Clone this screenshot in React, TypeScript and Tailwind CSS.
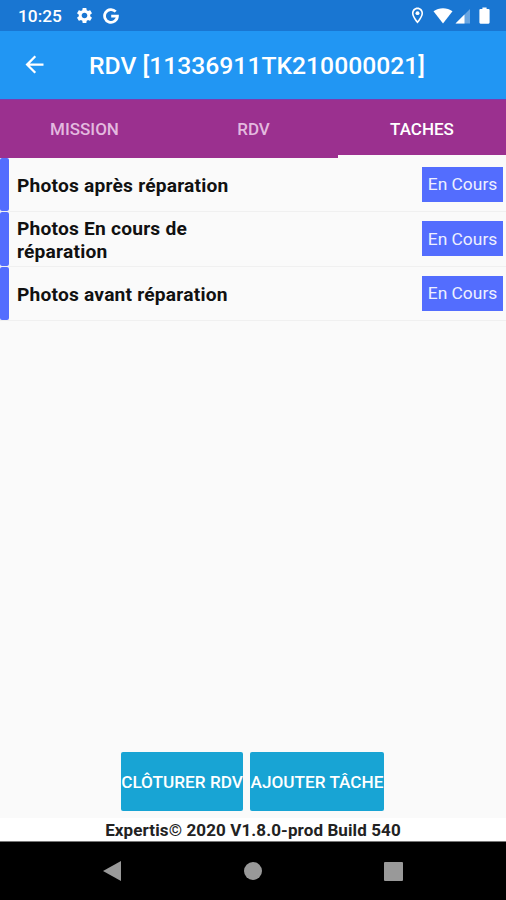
import { useState } from "react";
import { MdArrowBack, MdOutlineLocationOn, MdSettings } from "react-icons/md";
import clsx from "clsx";

const TABS = ["MISSION", "RDV", "TACHES"];

const TASKS = [
    { id: 1, title: "Photos après réparation", status: "En Cours" },
    { id: 2, title: "Photos En cours de réparation", status: "En Cours" },
    { id: 3, title: "Photos avant réparation", status: "En Cours" },
];

function GoogleIcon() {
    return (
        <svg width="16" height="16" viewBox="0 0 16 16" fill="none" stroke="currentColor" strokeWidth="2.8">
            <path d="M12.7 3.6A6.4 6.4 0 1 0 14.4 8.2H8.2" />
        </svg>
    );
}

function StatusBar() {
    return (
        <div className="flex h-[31px] shrink-0 items-center bg-[#1976d2] pl-[18px] pr-[16px] text-white">
            <span className="pt-[2px] text-[17.3px] font-medium leading-none">10:25</span>
            <MdSettings className="ml-[13px] size-[19px]" />
            <span className="ml-[9px]"><GoogleIcon /></span>
            <div className="ml-auto flex items-center">
                <MdOutlineLocationOn className="size-[19px]" />
                <svg className="ml-[6px]" width="20" height="16" viewBox="0 0 20 16" fill="currentColor">
                    <path d="M0.5 3.3C6 -0.8 14 -0.8 19.5 3.3L10 15.5Z" />
                </svg>
                <svg className="ml-[2px]" width="16" height="16" viewBox="0 0 16 16" fill="currentColor">
                    <path d="M15 1V15.5H0.5Z" opacity="0.35" />
                    <path d="M9.5 6.5V15.5H0.5Z" />
                </svg>
                <svg className="ml-[8px]" width="11" height="17" viewBox="0 0 11 17" fill="currentColor">
                    <path d="M3.4 0.5H7.6V2H9.5Q10.6 2 10.6 3.1V15.6Q10.6 16.7 9.5 16.7H1.5Q0.4 16.7 0.4 15.6V3.1Q0.4 2 1.5 2H3.4Z" />
                </svg>
            </div>
        </div>
    );
}

export default function App() {
    const [activeTab, setActiveTab] = useState("TACHES");

    return (
        <div className="flex h-[900px] w-[506px] flex-col overflow-hidden bg-[#fafafa] font-['Roboto',sans-serif]">
            <StatusBar />

            <header className="flex h-[68px] shrink-0 items-center bg-[#2196f3] pb-[2px] pl-[21px] text-white">
                <button aria-label="Retour">
                    <MdArrowBack className="size-[27px]" />
                </button>
                <h1 className="ml-[41px] pt-[5px] text-[24.7px] font-medium leading-none whitespace-nowrap">
                    RDV [11336911TK210000021]
                </h1>
            </header>

            <nav className="grid h-[58.5px] shrink-0 grid-cols-[169px_169px_168px] border-t border-[#7a3bb0] bg-[#9b308f]">
                {TABS.map((tab) => (
                    <button
                        key={tab}
                        onClick={() => setActiveTab(tab)}
                        className={clsx(
                            "border-b-[3px] pt-[5px] text-[17px] font-medium leading-none",
                            activeTab === tab ? "border-[#fafafa] text-white" : "border-transparent text-[#e3b9df]"
                        )}
                    >
                        {tab}
                    </button>
                ))}
            </nav>

            {/* Task list */}
            <ul>
                {TASKS.map((task) => (
                    <li key={task.id} className="flex h-[54.5px] items-center border-b border-[#f0f0f0] pr-[3px]">
                        <div className="h-full w-[9px] rounded-[2px] bg-[#536dfe]" />
                        <p className="ml-2 w-[220px] pr-[5px] pt-[3px] text-[19.2px] font-bold leading-[23px] tracking-[0.2px] text-[#111]">
                            {task.title}
                        </p>
                        <span className="ml-auto flex h-[35px] w-[81px] items-center justify-center bg-[#536dfe] text-[17.4px] text-[#eef0ff]">
                            {task.status}
                        </span>
                    </li>
                ))}
            </ul>

            <div className="mt-auto flex justify-center gap-[7px] pb-[7px] pr-[1px] text-[17.2px] font-medium text-white">
                <button className="flex h-[59px] w-[122px] items-center justify-center rounded-[2px] bg-[#18a4d4] pt-[3px] whitespace-nowrap">
                    CLÔTURER RDV
                </button>
                <button className="flex h-[59px] w-[134px] items-center justify-center rounded-[2px] bg-[#18a4d4] pt-[3px] whitespace-nowrap">
                    AJOUTER TÂCHE
                </button>
            </div>

            <footer className="flex h-[23px] shrink-0 items-center justify-center bg-white pt-[3px] text-[17px] font-bold tracking-[0.11px] text-[#222]">
                Expertis© 2020 V1.8.0-prod Build 540
            </footer>

            {/* Android navigation */}
            <div className="flex h-[59px] shrink-0 items-center justify-between border-t border-[#777] bg-black pl-[102px] pr-[103px] text-[#999]">
                <svg width="20" height="22" viewBox="0 0 20 22" fill="currentColor">
                    <path d="M19 1V21L1 11Z" />
                </svg>
                <div className="size-[18px] rounded-full bg-[#999]" />
                <div className="size-[19px] rounded-[1px] bg-[#999]" />
            </div>
        </div>
    );
}
